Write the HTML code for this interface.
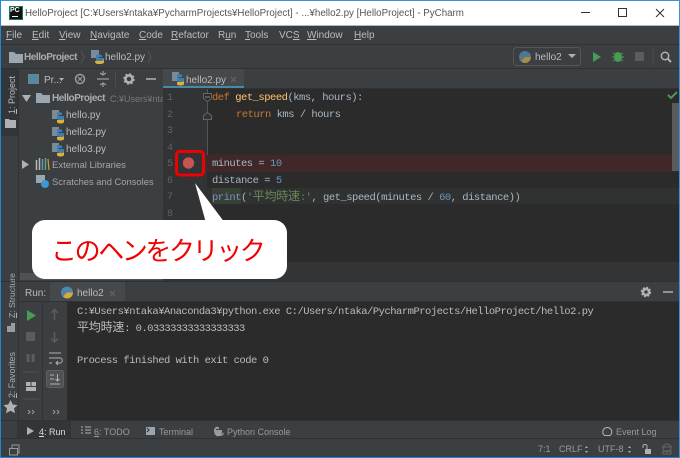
<!DOCTYPE html>
<html><head><meta charset="utf-8">
<style>
html,body{margin:0;padding:0;background:#3c3f41;}
#r{position:relative;width:680px;height:458px;overflow:hidden;background:#3c3f41;font-family:"Liberation Sans","Noto Sans CJK JP",sans-serif;font-size:10px;color:#bbbbbb;}
#r div{position:absolute;}
.t{white-space:nowrap;line-height:14px;}
.m{font-family:"Liberation Mono","Noto Sans CJK JP",monospace;font-size:10.5px;letter-spacing:-.5px;white-space:pre;line-height:14px;}
.k{letter-spacing:-.56px;}
.c{font-size:12px;letter-spacing:-.2px;}
u{text-decoration:underline;}
svg{position:absolute;overflow:visible;}
.ln{color:#606366;font-family:"Liberation Mono",monospace;font-size:10px;left:167px;line-height:14px;}
</style></head><body>
<div id="r">
<!-- backgrounds -->
<div style="left:0;top:0;width:680px;height:458px;background:#3c3f41"></div>
<div style="left:0;top:0;width:680px;height:1px;background:#3a93d6"></div>
<div style="left:0;top:1px;width:680px;height:24px;background:#fff"></div>
<div style="left:0;top:25px;width:680px;height:1px;background:#b8b8b8"></div>
<div style="left:0;top:44px;width:680px;height:1px;background:#323232"></div>
<div style="left:0;top:68px;width:680px;height:1px;background:#2f3132"></div>
<div style="left:18px;top:69px;width:1px;height:351px;background:#323232"></div>
<div style="left:1px;top:69px;width:17px;height:67px;background:#333638"></div>
<div style="left:163px;top:69px;width:517px;height:20px;background:#3c3f41"></div>
<div style="left:163px;top:69px;width:81px;height:19px;background:#45494c"></div>
<div style="left:163px;top:86px;width:81px;height:3px;background:#4a88a8"></div>
<div style="left:163px;top:88px;width:517px;height:1px;background:#323232"></div>
<!-- editor -->
<div style="left:163px;top:89px;width:517px;height:173px;background:#2b2b2b"></div>
<div style="left:163px;top:89px;width:44px;height:173px;background:#313335"></div>
<div style="left:163px;top:262px;width:517px;height:19px;background:#323436"></div>
<div style="left:207px;top:155px;width:473px;height:17px;background:#3f2827"></div>
<div style="left:207px;top:188px;width:473px;height:16px;background:#2f3230"></div>
<div style="left:212px;top:188px;width:29px;height:16px;background:#344134"></div>
<div style="left:207px;top:89px;width:1px;height:66px;background:#555"></div>
<!-- horizontal scrollbar -->
<div style="left:20px;top:273px;width:143px;height:7px;background:#4f5254"></div>
<div style="left:0;top:281px;width:680px;height:1px;background:#2d2f30"></div>
<!-- run panel -->
<div style="left:19px;top:282px;width:661px;height:19px;background:#3c3f41"></div>
<div style="left:50px;top:282px;width:75px;height:19px;background:#45494c"></div>
<div style="left:19px;top:301px;width:661px;height:1px;background:#323232"></div>
<div style="left:67px;top:302px;width:613px;height:118px;background:#2b2b2b"></div>
<div style="left:42px;top:302px;width:1px;height:118px;background:#323232"></div>
<div style="left:0;top:420px;width:680px;height:1px;background:#323232"></div>
<div style="left:17px;top:421px;width:54px;height:17px;background:#333638"></div>
<div style="left:0;top:438px;width:680px;height:1px;background:#323232"></div>
<!-- window borders -->
<div style="left:0;top:0;width:1px;height:458px;background:#1f87d8"></div>
<div style="left:679px;top:0;width:1px;height:458px;background:#3a93d6"></div>
<div style="left:0;top:457px;width:680px;height:1px;background:#1f87d8"></div>

<!-- title bar -->
<div style="left:9px;top:6px;width:14px;height:14px;background:#111;border:1px solid #1a7a5a;box-sizing:border-box"></div>
<div class="t" style="left:10px;top:6px;font-size:7px;font-weight:bold;color:#fff;line-height:9px">PC</div>
<div style="left:12px;top:16px;width:6px;height:1px;background:#fff"></div>
<div class="t" style="left:25px;top:7px;font-size:9.75px;color:#555">HelloProject [C:¥Users¥ntaka¥PycharmProjects¥HelloProject] - ...¥hello2.py [HelloProject] - PyCharm</div>
<svg style="left:0;top:0" width="680" height="26"><path d="M581 12.500h9" stroke="#333" fill="none"/><rect x="618.500" y="8.500" width="8" height="8" stroke="#333" fill="none"/><path d="M656 9l8 8M664 9l-8 8" stroke="#333" fill="none"/></svg>

<!-- menu -->
<div class="t" style="left:6px;top:29px"><u>F</u>ile</div>
<div class="t" style="left:32px;top:29px"><u>E</u>dit</div>
<div class="t" style="left:59px;top:29px"><u>V</u>iew</div>
<div class="t" style="left:90px;top:29px"><u>N</u>avigate</div>
<div class="t" style="left:139px;top:29px"><u>C</u>ode</div>
<div class="t" style="left:171px;top:29px"><u>R</u>efactor</div>
<div class="t" style="left:218px;top:29px">R<u>u</u>n</div>
<div class="t" style="left:245px;top:29px"><u>T</u>ools</div>
<div class="t" style="left:279px;top:29px">VC<u>S</u></div>
<div class="t" style="left:307px;top:29px"><u>W</u>indow</div>
<div class="t" style="left:354px;top:29px"><u>H</u>elp</div>

<!-- nav bar -->
<svg style="left:0;top:0" width="680" height="90">
<path d="M9 52h5l2 2h7v9H9z" fill="#9aa7b0"/>
<path d="M81 51l3 6-3 6M148 51l3 6-3 6" stroke="#555" fill="none"/>
<rect x="91" y="50" width="8" height="8" fill="#7a8a96"/><path d="M96 56c0-2 6-2 6 0v1h-3v1h5v3c0 2-8 3-8 0z" fill="#3d7fb0"/><path d="M95 61h6c2 0 3-1 3-2v3c0 2-3 2-5 2-3 0-4-1-4-3z" fill="#e0b030"/>
<rect x="513.500" y="47.500" width="67" height="18" rx="3" fill="#3c3f41" stroke="#555"/>
<circle cx="525" cy="57" r="6" fill="#4d7796"/><path d="M525 57h6a6 6 0 0 1-6 6a6 6 0 0 1-4-2z" fill="#a68d3f"/>
<path d="M568 54h8l-4 4z" fill="#afb1b3"/>
<path d="M593 52l8 5-8 5z" fill="#499c54"/>
<ellipse cx="618" cy="57" rx="4" ry="5" fill="#499c54"/><path d="M613 53l3 2M623 53l-3 2M612 57h3M624 57h-3M613 61l3-2M623 61l-3-2" stroke="#499c54"/>
<rect x="635" y="52" width="9" height="9" fill="#5a5c5e"/>
<path d="M653 48v17" stroke="#4a4d4f"/>
<circle cx="665" cy="56" r="3.700" stroke="#afb1b3" stroke-width="1.500" fill="none"/><path d="M668 59l3 3" stroke="#afb1b3" stroke-width="2"/>
</svg>
<div class="t" style="left:24px;top:51px;font-weight:bold;font-size:10px;letter-spacing:-.45px;color:#a9adb0">HelloProject</div>
<div class="t" style="left:105px;top:51px;font-size:10px">hello2.py</div>
<div class="t" style="left:535px;top:51px;font-size:10px">hello2</div>

<!-- left strip -->
<div class="t" style="left:5px;top:114px;transform-origin:0 0;transform:rotate(-90deg);font-size:9px;color:#bbb"><u>1</u>: Project</div>
<svg style="left:0;top:0" width="170" height="458">
<path d="M5 119h4l1 1h6v8H5z" fill="#afb1b3"/>
<path d="M7 326h4v-3h4v7H7zM7 330h8v2H7z" fill="#9a9da0"/>
<path d="M10.500 400l2.200 4.500 4.800.6-3.500 3.300 1 4.800-4.500-2.400-4.500 2.400 1-4.800-3.500-3.300 4.800-.6z" fill="#afb1b3"/>
<!-- project toolbar -->
<rect x="28.500" y="74.500" width="10" height="9" fill="#4f8ba8" stroke="#7c8184"/>
<path d="M59 78h5l-2.500 3z" fill="#afb1b3"/>
<circle cx="80" cy="79" r="4.500" fill="none" stroke="#9a9da0" stroke-width="1.500"/><path d="M78 77l4 4M82 77l-4 4" stroke="#9a9da0"/>
<path d="M97 79h12" stroke="#afb1b3"/><path d="M103 71v3M100 73l3 2 3-2M100 85l3-2 3 2M103 84v3" stroke="#afb1b3" fill="none"/>
<path d="M115.500 71v16" stroke="#4a4d4f"/>
<circle cx="129" cy="79" r="3.500" fill="none" stroke="#afb1b3" stroke-width="2.500"/><circle cx="129" cy="79" r="5" fill="none" stroke="#afb1b3" stroke-width="1.500" stroke-dasharray="2 1.930"/>
<path d="M146 79h10" stroke="#afb1b3" stroke-width="1.500"/>
<!-- tree -->
<path d="M22 95h9l-4.500 7z" fill="#afb1b3"/>
<path d="M36 93h5l2 2h7v8H36z" fill="#9aa7b0"/>
<path d="M22 160l7 4.500-7 4.500z" fill="#afb1b3"/>
<path d="M36.500 160v10M39.500 158v12" stroke="#b8b8b8" stroke-width="1.500"/><path d="M42.500 159v11" stroke="#4f9bc4" stroke-width="1.500"/><path d="M45.500 158v12" stroke="#62a664" stroke-width="1.500"/><path d="M48 159l1 11" stroke="#d0a040" stroke-width="1.200"/>
<rect x="36" y="175" width="9" height="8" fill="#9aa7b0"/><circle cx="45" cy="184" r="4" fill="#3d9ad0"/>
<rect x="52" y="110" width="7" height="9" fill="#7a8a96"/><path d="M57 113c0-1 5-1 5 0v2h-3v1h5v3c0 1-7 2-7-1z" fill="#3d7fb0"/><path d="M57 120h5c1 0 2-1 2-1v3c0 2-7 2-7 0z" fill="#e0b030"/>
<g transform="translate(0,17)"><rect x="52" y="110" width="7" height="9" fill="#7a8a96"/><path d="M57 113c0-1 5-1 5 0v2h-3v1h5v3c0 1-7 2-7-1z" fill="#3d7fb0"/><path d="M57 120h5c1 0 2-1 2-1v3c0 2-7 2-7 0z" fill="#e0b030"/></g>
<g transform="translate(0,33)"><rect x="52" y="110" width="7" height="9" fill="#7a8a96"/><path d="M57 113c0-1 5-1 5 0v2h-3v1h5v3c0 1-7 2-7-1z" fill="#3d7fb0"/><path d="M57 120h5c1 0 2-1 2-1v3c0 2-7 2-7 0z" fill="#e0b030"/></g>
</svg>
<div class="t" style="left:5px;top:318px;transform-origin:0 0;transform:rotate(-90deg);font-size:8.600px;color:#a9adb0"><u>Z</u>: Structure</div>
<div class="t" style="left:5px;top:398px;transform-origin:0 0;transform:rotate(-90deg);font-size:8.800px;color:#a9adb0"><u>2</u>: Favorites</div>

<div class="t" style="left:44px;top:74px;font-size:10px">Pr...</div>
<div class="t" style="left:52px;top:92px;font-weight:bold;font-size:10px;letter-spacing:-.45px;color:#a9adb0">HelloProject</div>
<div class="t" style="left:110px;top:92px;font-size:9px;color:#777;width:53px;overflow:hidden">C:¥Users¥ntaka</div>
<div class="t" style="left:66px;top:109px;font-size:10px">hello.py</div>
<div class="t" style="left:66px;top:126px;font-size:10px">hello2.py</div>
<div class="t" style="left:66px;top:143px;font-size:10px">hello3.py</div>
<div class="t" style="left:52px;top:159px;font-size:9.500px;color:#a4a7a9">External Libraries</div>
<div class="t" style="left:52px;top:175px;font-size:9.400px;color:#a4a7a9">Scratches and Consoles</div>

<!-- editor tab -->
<svg style="left:0;top:0" width="260" height="90"><rect x="172" y="72" width="7" height="9" fill="#7a8a96"/><path d="M177 75c0-1 5-1 5 0v2h-3v1h5v3c0 1-7 2-7-1z" fill="#3d7fb0"/><path d="M177 82h5c1 0 2-1 2-1v3c0 2-7 2-7 0z" fill="#e0b030"/><path d="M231 77l5 5M236 77l-5 5" stroke="#666"/></svg>
<div class="t" style="left:186px;top:74px;font-size:10px;color:#bbb">hello2.py</div>

<!-- gutter and code -->
<div class="ln" style="top:92px">1</div>
<div class="ln" style="top:109px">2</div>
<div class="ln" style="top:125px">3</div>
<div class="ln" style="top:142px">4</div>
<div class="ln" style="top:158px">5</div>
<div class="ln" style="top:175px">6</div>
<div class="ln" style="top:191px">7</div>
<div class="ln" style="top:208px">8</div>
<svg style="left:0;top:0" width="680" height="240">
<path d="M203.500 93.500h8v5l-4 3-4-3z" fill="#2b2b2b" stroke="#666"/><path d="M205 97h5" stroke="#888"/>
<path d="M203.500 119.500v-4l4-3 4 3v4z" fill="#313335" stroke="#666"/>
<circle cx="188.500" cy="163" r="5.700" fill="#c75450"/>
<rect x="176.500" y="151.500" width="27" height="23.500" rx="3" fill="none" stroke="#f00000" stroke-width="3"/>
<path d="M668 95l3 3 6-6" stroke="#499c54" stroke-width="2" fill="none"/>
<rect x="672" y="103" width="7" height="68" fill="#595b5d"/>
</svg>
<div class="m" style="left:212px;top:91px;color:#a9b7c6"><span style="color:#cc7832">def</span> <span style="color:#ffc66d">get_speed</span>(kms, hours):</div>
<div class="m" style="left:236px;top:108px;color:#a9b7c6"><span style="color:#cc7832">return</span> kms / hours</div>
<div class="m" style="left:212px;top:157px;color:#a9b7c6">minutes = <span style="color:#6897bb">10</span></div>
<div class="m" style="left:212px;top:174px;color:#a9b7c6">distance = <span style="color:#6897bb">5</span></div>
<div class="m" style="left:212px;top:190px;color:#a9b7c6"><span style="color:#8888c6">print</span>(<span style="color:#6a8759">'<span class="c">平均時速</span>:'</span>, get_speed(minutes / <span style="color:#6897bb">60</span>, distance))</div>

<!-- callout -->
<svg style="left:0;top:0" width="680" height="458"><path d="M195 183l30 40h-19z" fill="#fff"/><rect x="32" y="220" width="255" height="59" rx="13" fill="#fff"/></svg>
<div class="t" style="left:51px;top:233px;font-family:'Noto Sans CJK JP',sans-serif;font-size:26px;font-weight:400;line-height:34px;color:#f00000;letter-spacing:-2.400px">このヘンをクリック</div>

<!-- run header -->
<div class="t" style="left:25px;top:287px;font-size:10px">Run:</div>
<div class="t" style="left:77px;top:287px;font-size:10px">hello2</div>
<svg style="left:0;top:0" width="680" height="458">
<circle cx="67" cy="292.500" r="6" fill="#4d86ad"/><path d="M67 292.500h6a6 6 0 0 1-6 6a6 6 0 0 1-4-2z" fill="#d8a93a"/>
<path d="M110 291l5 5M115 291l-5 5" stroke="#666"/>
<circle cx="646" cy="292" r="3" fill="none" stroke="#afb1b3" stroke-width="2.500"/><circle cx="646" cy="292" r="4.500" fill="none" stroke="#afb1b3" stroke-width="1.500" stroke-dasharray="2 1.530"/>
<path d="M663 292h10" stroke="#afb1b3" stroke-width="1.500"/>
<!-- run toolbar -->
<path d="M27 310l9 5.500-9 5.500z" fill="#499c54"/>
<rect x="26" y="332" width="9" height="9" fill="#5a5c5e"/>
<path d="M28 354v8M33 354v8" stroke="#5a5c5e" stroke-width="3"/>
<path d="M23 372h16" stroke="#4e5254"/>
<path d="M26 382h4.500v4H26zM31.500 382h4.500v4h-4.500zM26 387h10v4H26z" fill="#afb1b3"/>
<path d="M23 399h16" stroke="#4e5254"/>
<path d="M28 414l2-2-2-2M32 414l2-2-2-2" stroke="#999" fill="none"/>
<path d="M54.500 320v-10M51 313l3.500-3.500 3.500 3.500" stroke="#5a5c5e" fill="none" stroke-width="1.500"/>
<path d="M54.500 332v10M51 338.500l3.500 3.500 3.500-3.500" stroke="#5a5c5e" fill="none" stroke-width="1.500"/>
<path d="M49 353h12M49 358h11c3 0 3 5 0 5h-4M49 363h3M58 361l-2 2 2 2" stroke="#afb1b3" fill="none"/>
<rect x="46.500" y="370.500" width="17" height="17" rx="2" fill="#4e5254" stroke="#5d6163"/>
<path d="M50 375h4M50 379h4M50 384h10M57.500 374v7M55.500 379l2 2 2-2" stroke="#afb1b3" fill="none"/>
<path d="M53 414l2-2-2-2M57 414l2-2-2-2" stroke="#999" fill="none"/>
<!-- bottom bar -->
<path d="M27 427l7 4-7 4z" fill="#afb1b3"/>
<path d="M81 427h2M81 430h2M81 433h2M85 427h6M85 430h6M85 433h6" stroke="#afb1b3"/>
<rect x="146" y="427" width="9" height="8" fill="#9aa7b0"/><path d="M147 428l2 2-2 2" stroke="#333" fill="none"/>
<path d="M214 431c0-5 5-5 5-3v1h-3v1h6v2c0 3-4 2-4 3h-3z" fill="#9a9da0"/><path d="M219 436c-4 1-3-2-3-2h5c2 0 2-2 2-2 2 3-1 4-4 4z" fill="#9a9da0"/>
<path d="M604.500 435.500a4.500 4.500 0 1 1 5.500 0z" fill="none" stroke="#afb1b3"/>
<!-- status -->
<rect x="12" y="445" width="7" height="8" stroke="#999" fill="none"/><rect x="9.500" y="448.500" width="8" height="6.500" stroke="#999" fill="#3c3f41"/>
<path d="M585 448l1.500-2 1.500 2zM585 451l1.500 2 1.500-2zM628 448l1.500-2 1.500 2zM628 451l1.500 2 1.500-2z" fill="#afb1b3"/>
<rect x="645" y="449" width="6" height="5" fill="#afb1b3"/><path d="M643 448v-2c0-2 4-2 4 0v3" stroke="#afb1b3" fill="none"/>
<circle cx="667" cy="448" r="4" fill="none" stroke="#666"/><path d="M663 451h8v3h-8zM662 447h10" stroke="#666" fill="none"/>
</svg>

<!-- console -->
<div class="m" style="left:77px;top:305px;color:#bbb">C:¥Users¥ntaka¥Anaconda3¥python.exe C:/Users/ntaka/PycharmProjects/HelloProject/hello2.py</div>
<div class="m k" style="left:77px;top:321px;color:#bbb"><span class="c">平均時速</span>: 0.03333333333333333</div>
<div class="m" style="left:77px;top:354px;color:#bbb">Process finished with exit code 0</div>

<!-- bottom tabs -->
<div class="t" style="left:39px;top:425px;font-size:9px;color:#ddd"><u>4</u>: Run</div>
<div class="t" style="left:94px;top:425px;font-size:9px;color:#999"><u>6</u>: TODO</div>
<div class="t" style="left:159px;top:425px;font-size:9px;color:#999">Terminal</div>
<div class="t" style="left:227px;top:425px;font-size:9px;color:#999">Python Console</div>
<div class="t" style="left:616px;top:425px;font-size:9px;color:#999">Event Log</div>
<div class="t" style="left:538px;top:442px;font-size:9px;color:#999">7:1</div>
<div class="t" style="left:559px;top:442px;font-size:9px;color:#999">CRLF</div>
<div class="t" style="left:598px;top:442px;font-size:9px;color:#999">UTF-8</div>
</div>
</body></html>
